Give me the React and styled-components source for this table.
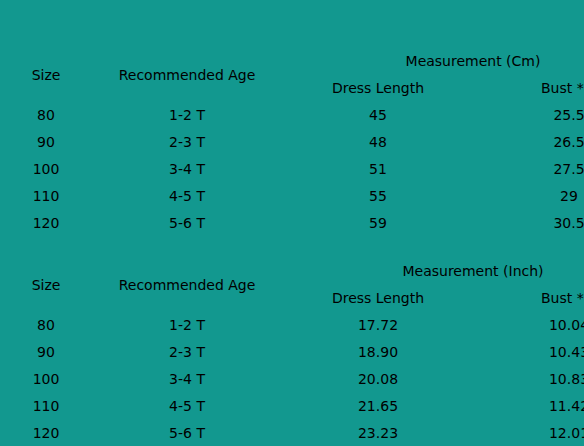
import React from "react";
import styled, { createGlobalStyle } from "styled-components";

const GlobalStyle = createGlobalStyle`
	html, body {
		margin: 0;
		padding: 0;
		background: #12988f;
	}
`;

const Page = styled.main`
	width: 584px;
	height: 446px;
	overflow: hidden;
	background: #12988f;
	padding-top: 48px;
	box-sizing: border-box;
	display: flex;
	flex-direction: column;
	gap: 21px;
	font-family: "DejaVu Sans", Verdana, sans-serif;
	font-size: 14px;
	color: #000;
`;

const Table = styled.table`
	border-collapse: collapse;
	table-layout: fixed;
	width: 854px;
	flex-shrink: 0;
`;

const Col = styled.col`
	width: ${(p) => p.$w}px;
`;

const Cell = styled.td`
	height: 27px;
	padding: 0;
	text-align: center;
	vertical-align: middle;
	white-space: nowrap;
	line-height: 27px;
`;

const Head = styled(Cell).attrs({ as: "th" })`
	font-weight: normal;
`;

const widths = [92, 190, 192, 190, 190];
const sizes = [80, 90, 100, 110, 120];
const ages = ["1-2 T", "2-3 T", "3-4 T", "4-5 T", "5-6 T"];

const charts = [
	{
		unit: "Cm",
		length: ["45", "48", "51", "55", "59"],
		bust: ["25.5", "26.5", "27.5", "29", "30.5"],
	},
	{
		unit: "Inch",
		length: ["17.72", "18.90", "20.08", "21.65", "23.23"],
		bust: ["10.04", "10.43", "10.83", "11.42", "12.01"],
	},
];

const SizeChart = ({ unit, length, bust }) => (
	<Table>
		<colgroup>
			{widths.map((w, idx) => (
				<Col key={idx} $w={w} />
			))}
		</colgroup>
		<thead>
			<tr>
				<Head rowSpan={2}>Size</Head>
				<Head rowSpan={2}>Recommended Age</Head>
				<Head colSpan={2}>Measurement ({unit})</Head>
				<Head />
			</tr>
			<tr>
				<Cell>Dress Length</Cell>
				<Cell>Bust * 2</Cell>
				<Cell />
			</tr>
		</thead>
		<tbody>
			{sizes.map((size, idx) => (
				<tr key={size}>
					<Cell>{size}</Cell>
					<Cell>{ages[idx]}</Cell>
					<Cell>{length[idx]}</Cell>
					<Cell>{bust[idx]}</Cell>
					<Cell />
				</tr>
			))}
		</tbody>
	</Table>
);

const App = () => (
	<>
		<GlobalStyle />
		<Page>
			{charts.map((chart) => (
				<SizeChart key={chart.unit} {...chart} />
			))}
		</Page>
	</>
);

export default App;
